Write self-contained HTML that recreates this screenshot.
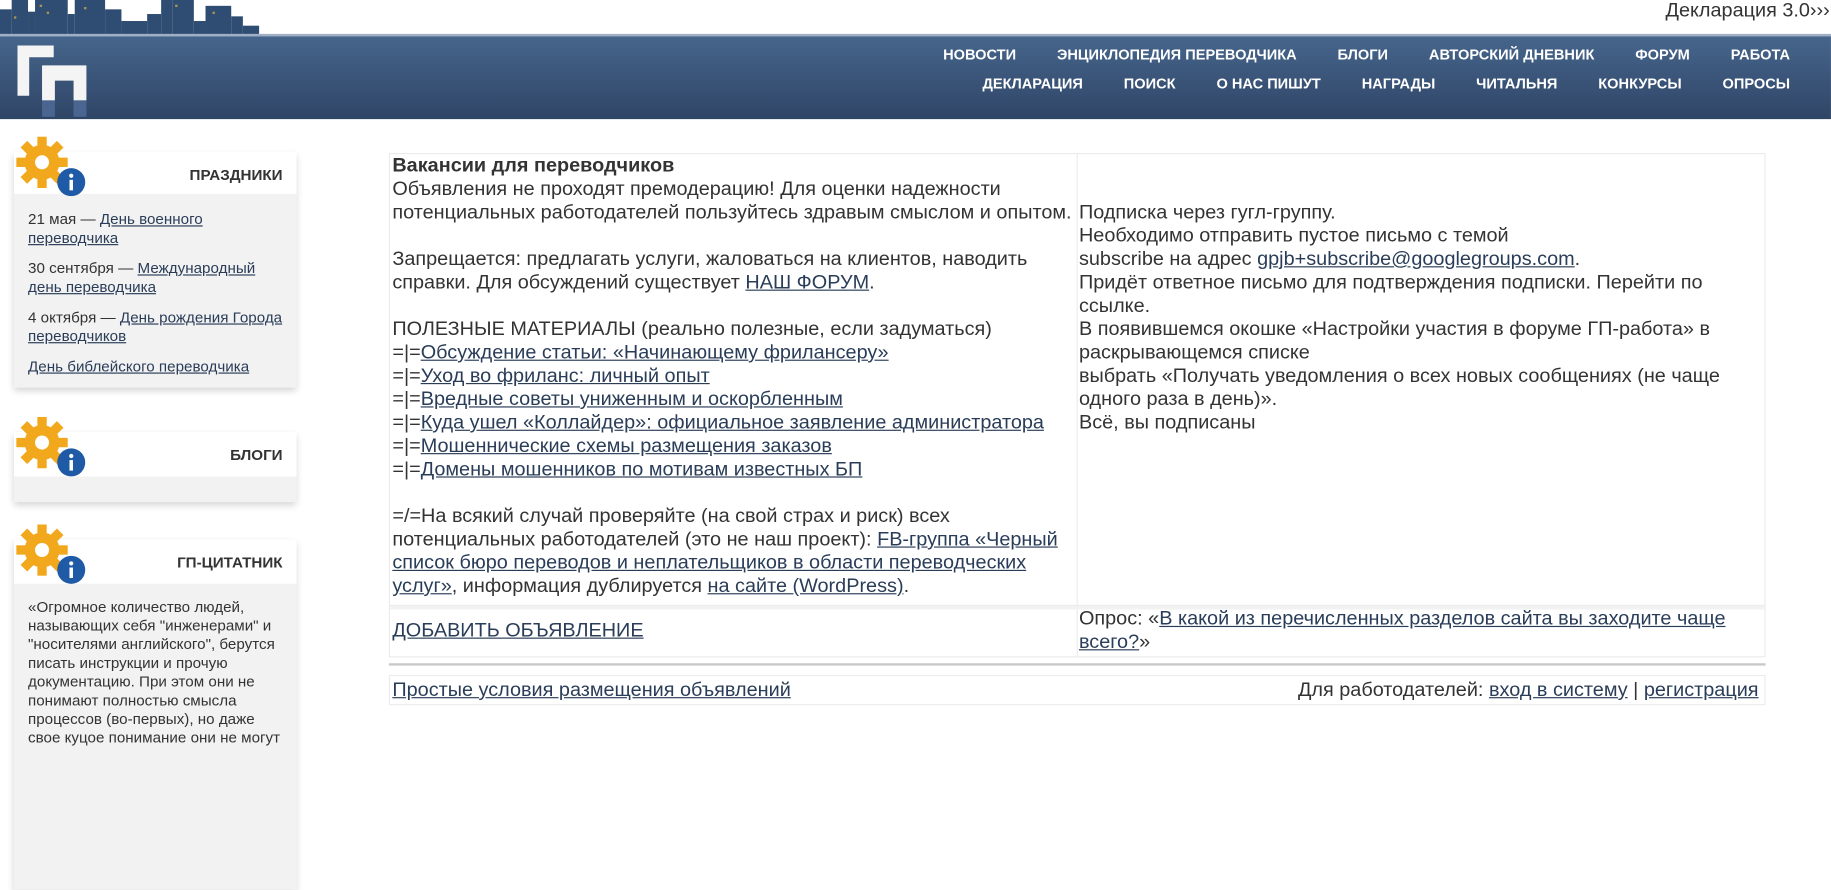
<!DOCTYPE html>
<html><head><meta charset="utf-8">
<style>
*{margin:0;padding:0;box-sizing:border-box}
html,body{width:1831px;height:735px;overflow:hidden;background:#fff}
#w{position:absolute;left:0;top:0;width:1568px;height:630px;transform:scale(1.1677);transform-origin:0 0;font-family:"Liberation Sans",Arial,sans-serif;color:#333}
a{color:#2a3d58;text-decoration:underline}
.nav{position:absolute;left:0;top:29px;width:1568px;height:73px;background:linear-gradient(#46658c,#2f4566);border-top:2px solid #9fb0c4}
.nr{position:absolute;right:35px;display:flex;font-size:12.5px;font-weight:bold;color:#fff;white-space:nowrap}
.nr span{margin-left:35px}
.card{position:absolute;left:12px;width:242px;box-shadow:0 3px 6px rgba(0,0,0,.18)}
.card .h{background:#fff;height:38px;text-align:right;padding:12px 12px 0 0;font-weight:bold;font-size:13px;color:#333}
.card .b{background:#f2f2f2;font-size:13px;line-height:16px;padding:14px 12px 10px 12px;color:#333}
.card .b p{margin-bottom:10px}
.gear{position:absolute;left:0;top:-13px}
.txt{position:absolute;font-size:17px;line-height:20px;white-space:nowrap;color:#333}
</style></head><body><div id="w">
<svg style="position:absolute;left:0;top:0" width="222" height="30">
<g fill="#2f4c72">
<rect x="0" y="8" width="10" height="22"/><rect x="10" y="0" width="14" height="30"/><rect x="24" y="10" width="6" height="20"/>
<rect x="30" y="0" width="28" height="30"/><rect x="58" y="12" width="6" height="18"/><rect x="64" y="0" width="26" height="30"/>
<rect x="90" y="8" width="14" height="22"/><rect x="104" y="18" width="22" height="12"/><rect x="126" y="12" width="12" height="18"/>
<rect x="138" y="0" width="10" height="30"/><rect x="148" y="0" width="18" height="30"/><rect x="166" y="18" width="10" height="12"/>
<rect x="176" y="5" width="22" height="25"/><rect x="198" y="14" width="10" height="16"/><rect x="208" y="22" width="14" height="8"/>
</g>
<g fill="#c9a64a" opacity=".8"><rect x="34" y="4" width="2" height="2"/><rect x="40" y="10" width="2" height="2"/><rect x="72" y="6" width="2" height="2"/><rect x="150" y="4" width="2" height="2"/><rect x="182" y="10" width="2" height="2"/><rect x="12" y="14" width="2" height="2"/></g>
</svg>
<div style="position:absolute;right:1px;top:-1px;font-size:17px;color:#333">Декларация 3.0›››</div>
<div class="nav">
<div class="nr" style="top:9px"><span>НОВОСТИ</span><span>ЭНЦИКЛОПЕДИЯ ПЕРЕВОДЧИКА</span><span>БЛОГИ</span><span>АВТОРСКИЙ ДНЕВНИК</span><span>ФОРУМ</span><span>РАБОТА</span></div>
<div class="nr" style="top:34px"><span>ДЕКЛАРАЦИЯ</span><span>ПОИСК</span><span>О НАС ПИШУТ</span><span>НАГРАДЫ</span><span>ЧИТАЛЬНЯ</span><span>КОНКУРСЫ</span><span>ОПРОСЫ</span></div>
</div>
<svg style="position:absolute;left:0;top:0" width="100" height="120">
<path d="M15 39H46V49H25V82H15Z" fill="#f4f4f4"/>
<path d="M36 56H74V86H63V69H47V86H36Z" fill="#f4f4f4"/>
<rect x="36" y="86" width="11" height="14" fill="#4a6690"/>
<rect x="63" y="86" width="11" height="14" fill="#4a6690"/>
</svg>

<div class="card" style="top:130px">
<svg class="gear" width="62" height="52" viewBox="0 0 62 52"><g transform="translate(24,22)"><g fill="#f2a81c"><circle r="15"/><rect x="-4" y="-22" width="8" height="9"/><rect x="-4" y="-22" width="8" height="9" transform="rotate(45)"/><rect x="-4" y="-22" width="8" height="9" transform="rotate(90)"/><rect x="-4" y="-22" width="8" height="9" transform="rotate(135)"/><rect x="-4" y="-22" width="8" height="9" transform="rotate(180)"/><rect x="-4" y="-22" width="8" height="9" transform="rotate(225)"/><rect x="-4" y="-22" width="8" height="9" transform="rotate(270)"/><rect x="-4" y="-22" width="8" height="9" transform="rotate(315)"/></g><circle r="6" fill="#fff"/></g><circle cx="49" cy="39" r="12" fill="#1e5aa6"/><rect x="47.5" y="37" width="3" height="9" fill="#fff"/><circle cx="49" cy="33.5" r="1.8" fill="#fff"/></svg>
<div class="h" style="height:36px">ПРАЗДНИКИ</div>
<div class="b"><p>21 мая — <a>День военного<br>переводчика</a></p><p>30 сентября — <a>Международный<br>день переводчика</a></p><p>4 октября — <a>День рождения Города<br>переводчиков</a></p><p style="margin-bottom:0"><a>День библейского переводчика</a></p></div>
</div>
<div class="card" style="top:370px">
<svg class="gear" width="62" height="52" viewBox="0 0 62 52"><g transform="translate(24,22)"><g fill="#f2a81c"><circle r="15"/><rect x="-4" y="-22" width="8" height="9"/><rect x="-4" y="-22" width="8" height="9" transform="rotate(45)"/><rect x="-4" y="-22" width="8" height="9" transform="rotate(90)"/><rect x="-4" y="-22" width="8" height="9" transform="rotate(135)"/><rect x="-4" y="-22" width="8" height="9" transform="rotate(180)"/><rect x="-4" y="-22" width="8" height="9" transform="rotate(225)"/><rect x="-4" y="-22" width="8" height="9" transform="rotate(270)"/><rect x="-4" y="-22" width="8" height="9" transform="rotate(315)"/></g><circle r="6" fill="#fff"/></g><circle cx="49" cy="39" r="12" fill="#1e5aa6"/><rect x="47.5" y="37" width="3" height="9" fill="#fff"/><circle cx="49" cy="33.5" r="1.8" fill="#fff"/></svg>
<div class="h">БЛОГИ</div>
<div class="b" style="height:22px;padding:0"></div>
</div>
<div class="card" style="top:462px;height:300px;background:#f2f2f2">
<svg class="gear" width="62" height="52" viewBox="0 0 62 52"><g transform="translate(24,22)"><g fill="#f2a81c"><circle r="15"/><rect x="-4" y="-22" width="8" height="9"/><rect x="-4" y="-22" width="8" height="9" transform="rotate(45)"/><rect x="-4" y="-22" width="8" height="9" transform="rotate(90)"/><rect x="-4" y="-22" width="8" height="9" transform="rotate(135)"/><rect x="-4" y="-22" width="8" height="9" transform="rotate(180)"/><rect x="-4" y="-22" width="8" height="9" transform="rotate(225)"/><rect x="-4" y="-22" width="8" height="9" transform="rotate(270)"/><rect x="-4" y="-22" width="8" height="9" transform="rotate(315)"/></g><circle r="6" fill="#fff"/></g><circle cx="49" cy="39" r="12" fill="#1e5aa6"/><rect x="47.5" y="37" width="3" height="9" fill="#fff"/><circle cx="49" cy="33.5" r="1.8" fill="#fff"/></svg>
<div class="h">ГП-ЦИТАТНИК</div>
<div class="b" style="padding-top:12px">«Огромное количество людей,<br>называющих себя "инженерами" и<br>"носителями английского", берутся<br>писать инструкции и прочую<br>документацию. При этом они не<br>понимают полностью смысла<br>процессов (во-первых), но даже<br>свое куцое понимание они не могут</div>
</div>

<div style="position:absolute;left:333px;top:131px;width:1179px;height:388px;border:1px solid #ececec"></div>
<div style="position:absolute;left:922px;top:131px;width:1px;height:432px;background:#ececec"></div>
<div style="position:absolute;left:333px;top:519px;width:1179px;height:44px;border:1px solid #ececec;border-top:3px solid #f2f2f2"></div>
<div style="position:absolute;left:333px;top:568px;width:1179px;height:2px;background:#c8c8c8"></div>
<div style="position:absolute;left:333px;top:578px;width:1179px;height:26px;border:1px solid #ececec"></div>

<div class="txt" style="left:336px;top:132px"><b>Вакансии для переводчиков</b><br>Объявления не проходят премодерацию! Для оценки надежности<br>потенциальных работодателей пользуйтесь здравым смыслом и опытом.<br><br>Запрещается: предлагать услуги, жаловаться на клиентов, наводить<br>справки. Для обсуждений существует <a>НАШ ФОРУМ</a>.<br><br>ПОЛЕЗНЫЕ МАТЕРИАЛЫ (реально полезные, если задуматься)<br>=|=<a>Обсуждение статьи: «Начинающему фрилансеру»</a><br>=|=<a>Уход во фриланс: личный опыт</a><br>=|=<a>Вредные советы униженным и оскорбленным</a><br>=|=<a>Куда ушел «Коллайдер»: официальное заявление администратора</a><br>=|=<a>Мошеннические схемы размещения заказов</a><br>=|=<a>Домены мошенников по мотивам известных БП</a><br><br>=/=На всякий случай проверяйте (на свой страх и риск) всех<br>потенциальных работодателей (это не наш проект): <a>FB-группа «Черный<br>список бюро переводов и неплательщиков в области переводческих<br>услуг»</a>, информация дублируется <a>на сайте (WordPress)</a>.</div>
<div class="txt" style="left:924px;top:172px">Подписка через гугл-группу.<br>Необходимо отправить пустое письмо с темой<br>subscribe на адрес <a>gpjb+subscribe@googlegroups.com</a>.<br>Придёт ответное письмо для подтверждения подписки. Перейти по<br>ссылке.<br>В появившемся окошке «Настройки участия в форуме ГП-работа» в<br>раскрывающемся списке<br>выбрать «Получать уведомления о всех новых сообщениях (не чаще<br>одного раза в день)».<br>Всё, вы подписаны</div>
<div class="txt" style="left:336px;top:530px"><a>ДОБАВИТЬ ОБЪЯВЛЕНИЕ</a></div>
<div class="txt" style="left:924px;top:520px">Опрос: «<a>В какой из перечисленных разделов сайта вы заходите чаще<br>всего?</a>»</div>
<div class="txt" style="left:336px;top:581px"><a>Простые условия размещения объявлений</a></div>
<div class="txt" style="right:62px;top:581px">Для работодателей: <a>вход в систему</a> | <a>регистрация</a></div>
</div></body></html>
